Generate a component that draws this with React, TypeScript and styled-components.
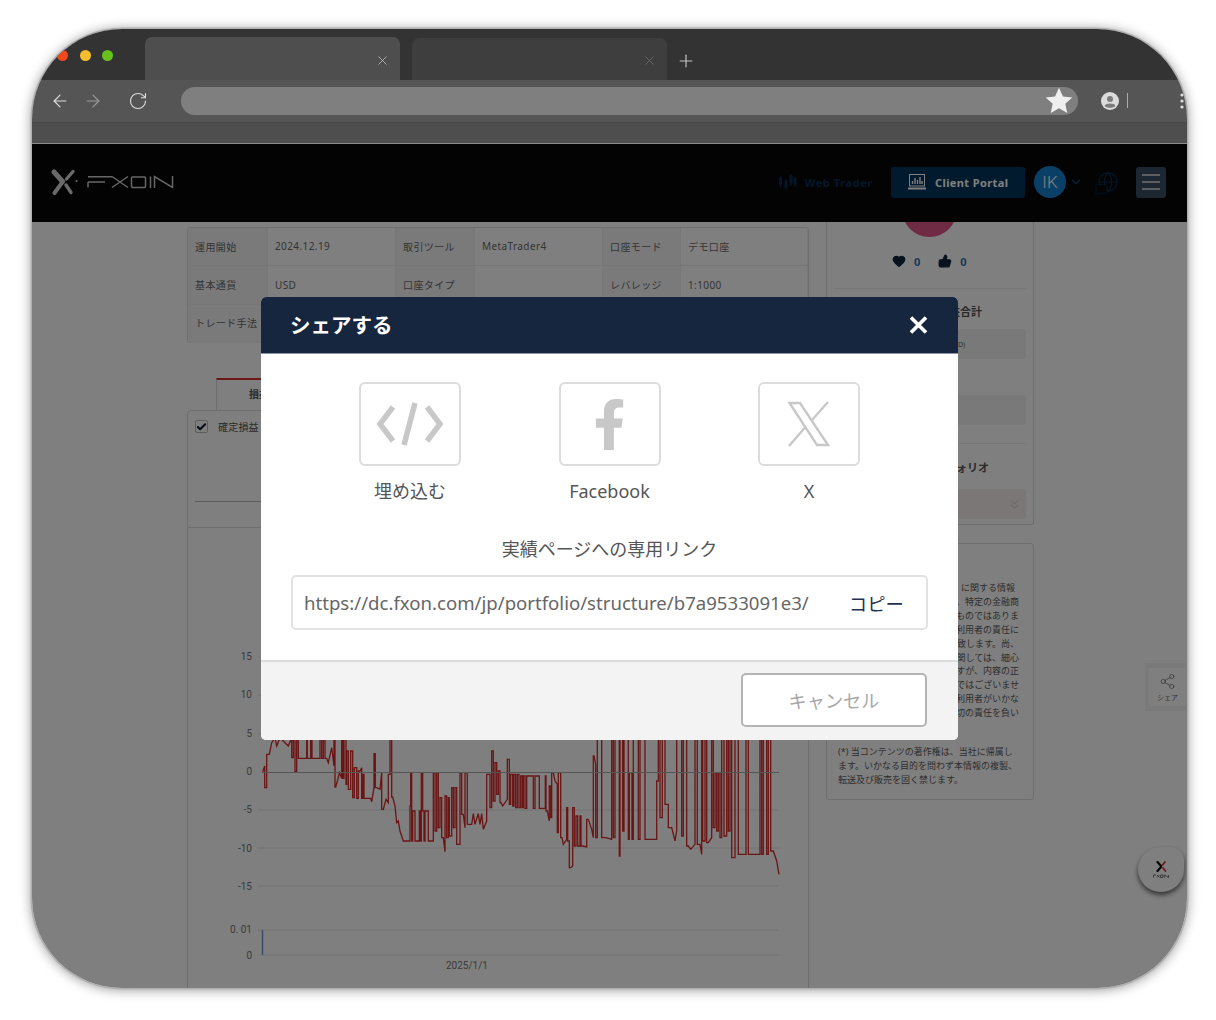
import React from "react";
import styled, { createGlobalStyle } from "styled-components";
import { ArrowLeft, ArrowRight, RotateCw, Plus, X, Globe, MessageSquare, ChevronDown, ChevronsDown, Heart, ThumbsUp, Share2, Check } from "lucide-react";
import { FaFacebookF } from "react-icons/fa";

const FONT = `"Noto Sans", "Noto Sans CJK JP", sans-serif`;

const Global = createGlobalStyle`
  html, body { margin: 0; padding: 0; background: #fff; overflow: hidden; height: 1020px; }
  * { box-sizing: border-box; }
  body { font-family: ${FONT}; }
`;

const Stage = styled.div`
  width: 1216px;
  height: 1020px;
  padding: 29px 29px 32px 32px;
`;
const Win = styled.div`
  width: 1155px;
  height: 959px;
  border-radius: 90px;
  overflow: hidden;
  display: flex;
  flex-direction: column;
  box-shadow: 0 0 0 1.5px #b0b0b0, 0 1px 12px 1px rgba(0, 0, 0, 0.4);
`;
const TabStrip = styled.div`
  height: 51px;
  background: #333;
  display: flex;
  align-items: flex-end;
  padding-left: 25px;
  flex: none;
`;
const Lights = styled.div`
  display: flex;
  gap: 11.5px;
  align-self: flex-start;
  margin: 21px 32px 0 0;
`;
const Light = styled.span<{ $c: string }>`
  width: 11px;
  height: 11px;
  border-radius: 50%;
  background: ${(p) => p.$c};
`;
const Tab = styled.div<{ $active?: boolean }>`
  width: 255px;
  height: ${(p) => (p.$active ? 43 : 42)}px;
  margin-right: 12px;
  border-radius: 7px 7px 0 0;
  background: ${(p) => (p.$active ? "#4e4e4e" : "#3e3e3e")};
  color: ${(p) => (p.$active ? "#c0c0c0" : "#707070")};
  display: flex;
  align-items: center;
  justify-content: flex-end;
  padding: 3px 10px 0 0;
`;
const NewTab = styled.div`
  color: #c4c4c4;
  display: flex;
  margin: 0 0 9px -3px;
`;
const Toolbar = styled.div`
  height: 43px;
  flex: none;
  background: #555;
  border-bottom: 1px solid #494949;
  display: flex;
  align-items: center;
  padding: 0 0 1px 18px;
`;
const NavIcon = styled.span<{ $dim?: boolean; $gap: number }>`
  display: flex;
  margin-right: ${(p) => p.$gap}px;
  color: ${(p) => (p.$dim ? "#9a9a9a" : "#dedede")};
`;
const UrlPill = styled.div`
  width: 897px;
  height: 28px;
  border-radius: 14px;
  background: #7f7f7f;
  display: flex;
  align-items: center;
  justify-content: flex-end;
  padding-right: 5px;
  margin-right: 23px;
`;
const ToolSep = styled.span`
  width: 1px;
  height: 15px;
  background: #aaa;
  margin-left: 8px;
`;
const MenuDots = styled.svg`
  margin-left: 52px;
`;
const BookmarkBar = styled.div`
  height: 21px;
  flex: none;
  background: #4e4e4e;
  border-bottom: 1px solid #8c8c8c;
`;
const Page = styled.div`
  position: relative;
  flex: 1;
  background: #fff;
  overflow: hidden;
`;
const Nav = styled.header`
  position: relative;
  z-index: 1;
  height: 78px;
  background: #060606;
  display: flex;
  align-items: center;
  padding: 0 21px 2px 19px;
`;
const NavRight = styled.div`
  margin-left: auto;
  display: flex;
  align-items: center;
`;
const WebTrader = styled.a`
  display: flex;
  align-items: center;
  gap: 8px;
  font-size: 11px;
  font-weight: 700;
  letter-spacing: 0.6px;
  color: #043054;
  margin-right: 18px;
`;
const PortalButton = styled.a`
  width: 134px;
  height: 31px;
  border-radius: 3px;
  background: #05345a;
  color: #fff;
  display: flex;
  align-items: center;
  padding-left: 17px;
  gap: 9px;
  font-size: 11px;
  font-weight: 700;
  letter-spacing: 0.4px;
  margin-right: 9px;
`;
const UserCircle = styled.div`
  width: 32px;
  height: 32px;
  border-radius: 50%;
  background: #1480d0;
  color: #fff;
  font: 300 17px Roboto, sans-serif;
  display: flex;
  align-items: center;
  justify-content: center;
`;
const UserCaret = styled.span`
  display: flex;
  color: #0a4a78;
  margin: 0 14px 0 3px;
`;
const GlobeWrap = styled.span`
  position: relative;
  display: flex;
  color: #043054;
  margin-right: 17px;
`;
const GlobeBubble = styled.span`
  position: absolute;
  left: -2px;
  bottom: -3px;
  display: flex;
`;
const Burger = styled.button`
  width: 30px;
  height: 31px;
  border: 0;
  padding: 0;
  border-radius: 3px;
  background: #384e64;
  display: flex;
  align-items: center;
  justify-content: center;
`;
const Content = styled.main`
  display: flex;
  gap: 17px;
  padding: 5px 0 0 155px;
`;
const LeftCol = styled.div`
  width: 622px;
  flex: none;
`;
const InfoTable = styled.div`
  display: grid;
  grid-template-columns: 80px 128px 79px 128px 78px 1fr;
  grid-auto-rows: 38.4px;
  height: 116px;
  border: 1px solid #ddd;
  border-radius: 3px;
`;
const Cell = styled.div<{ $label?: boolean }>`
  background: ${(p) => (p.$label ? "#f4f4f4" : "#fff")};
  border-bottom: 1px solid #eee;
  border-right: 1px solid #eee;
  font-size: 10px;
  letter-spacing: 0.4px;
  color: #6a6a6a;
  display: flex;
  align-items: center;
  padding: 0 0 1px 7px;
  white-space: nowrap;
`;
const TabRow = styled.div`
  margin: 35px 0 0 29px;
  width: 90px;
  height: 32px;
  border: 1px solid #ddd;
  border-top: 2px solid #d83030;
  border-bottom: 0;
  font-size: 10px;
  font-weight: 700;
  color: #555;
  padding: 6px 0 0 32px;
`;
const FilterPanel = styled.div`
  height: 118px;
  border: 1px solid #ddd;
  border-radius: 4px 4px 0 0;
  padding: 8px 7px 0;
`;
const CheckRow = styled.div`
  display: flex;
  align-items: center;
  gap: 10px;
  font-size: 10px;
  letter-spacing: 0.2px;
  color: #555;
`;
const CheckBox = styled.span`
  width: 13px;
  height: 13px;
  border: 1px solid #bbb;
  border-radius: 2px;
  color: #0c1a30;
  display: flex;
  align-items: center;
  justify-content: center;
`;
const Rule = styled.div`
  height: 1px;
  background: #bbb;
  margin-top: 67px;
`;
const ChartPanel = styled.div`
  height: 470px;
  border: 1px solid #ddd;
  border-top: 0;
`;
const RightCol = styled.aside`
  width: 208px;
  flex: none;
  margin-top: -5px;
`;
const Card = styled.section<{ $h: number }>`
  height: ${(p) => p.$h}px;
  border: 1px solid #ddd;
  border-radius: 0 0 3px 3px;
  padding: 0 7px;
`;
const ProfileCard = styled(Card)`
  border-top: 0;
  display: flow-root;
`;
const Avatar = styled.div`
  width: 55px;
  height: 55px;
  border-radius: 50%;
  background: #de5686;
  margin: -40px 0 0 68px;
`;
const Reactions = styled.div`
  height: 16px;
  margin: 16px 0 0 58px;
  display: flex;
  align-items: center;
  font-size: 11px;
  font-weight: 700;
  color: #2f6fae;
`;
const ReactIcon = styled.span<{ $gap: number }>`
  display: flex;
  color: #10243f;
  margin-right: ${(p) => p.$gap}px;
`;
const ReactCount = styled.span`
  margin-right: 18px;
`;
const Divider = styled.div<{ $mt: number }>`
  height: 1px;
  background: #eee;
  margin-top: ${(p) => p.$mt}px;
`;
const SideTitle = styled.div<{ $mt: number; $ml: number }>`
  margin: ${(p) => p.$mt}px 0 0 ${(p) => p.$ml}px;
  height: 16px;
  line-height: 16px;
  font-size: 11px;
  font-weight: 700;
  color: #555;
`;
const ValueBox = styled.div<{ $mt: number; $tint?: boolean }>`
  height: 30px;
  margin-top: ${(p) => p.$mt}px;
  background: ${(p) => (p.$tint ? "#f6efee" : "#f3f3f3")};
  border-radius: 2px;
  display: flex;
  align-items: center;
  justify-content: space-between;
  padding: 0 4px 0 124px;
  font-size: 7px;
  color: #666;
`;
const ChevronIcon = styled.span`
  display: flex;
  color: #b8b8b8;
`;
const NoticeCard = styled(Card)`
  margin-top: 18px;
  border-top: 1px solid #ddd;
  border-radius: 3px;
  padding: 37px 14px 0 11px;
  font-size: 9px;
  line-height: 13.9px;
  color: #5c5c5c;
`;
const NoticeLine = styled.div<{ $inset?: boolean }>`
  text-align: right;
  white-space: nowrap;
  padding-right: ${(p) => (p.$inset ? 4 : 0)}px;
`;
const CopyrightNote = styled.div`
  margin-top: 25px;
  white-space: nowrap;
`;
const SideShare = styled.div`
  position: absolute;
  right: 1px;
  top: 519px;
  width: 41px;
  height: 48px;
  background: #f5f5f5;
  padding: 5px 0 5px 4px;
`;
const SideShareInner = styled.div`
  height: 100%;
  background: #fff;
  border-radius: 2px;
  font-size: 7px;
  line-height: 10px;
  display: flex;
  flex-direction: column;
  align-items: center;
  padding-top: 5px;
  gap: 3px;
  color: #666;
`;
const FloatButton = styled.div`
  position: absolute;
  left: 1106px;
  top: 703px;
  width: 46px;
  height: 45px;
  border-radius: 50% 30% 50% 50%;
  background: #fff;
  box-shadow: 0 3px 5px rgba(0, 0, 0, 0.6);
  display: flex;
  align-items: center;
  justify-content: center;
`;
const Overlay = styled.div`
  position: absolute;
  inset: 0;
  z-index: 5;
  background: rgba(0, 0, 0, 0.5);
  padding: 153px 0 0 229px;
`;
const Modal = styled.div`
  width: 697px;
  height: 443px;
  border-radius: 5px;
  background: #fff;
  overflow: hidden;
  display: flex;
  flex-direction: column;
`;
const ModalHead = styled.div`
  height: 57px;
  flex: none;
  background: #16263f;
  border-bottom: 1px solid #8b95a5;
  display: flex;
  align-items: center;
  justify-content: space-between;
  padding: 0 30px 2px 29px;
  color: #fff;
  font-size: 20.5px;
  font-weight: 700;
`;
const CloseButton = styled.svg`
  display: block;
  margin-top: 2px;
`;
const ModalBody = styled.div`
  flex: 1;
  padding-top: 28px;
`;
const ShareRow = styled.div`
  display: flex;
  justify-content: center;
  gap: 97.5px;
`;
const ShareItem = styled.div`
  width: 102px;
  display: flex;
  flex-direction: column;
  align-items: center;
  gap: 13px;
`;
const ShareBox = styled.div`
  width: 102px;
  height: 84px;
  border: 2px solid #dcdcdc;
  border-radius: 6px;
  color: #c8c8c8;
  display: flex;
  align-items: center;
  justify-content: center;
`;
const ShareLabel = styled.div`
  height: 24px;
  line-height: 24px;
  font-size: 18px;
  color: #555;
  white-space: nowrap;
`;
const LinkTitle = styled.div`
  margin-top: 34px;
  height: 24px;
  line-height: 24px;
  text-align: center;
  font-size: 18px;
  color: #555;
`;
const LinkBox = styled.div`
  margin: 14px 30px 0;
  height: 55px;
  border: 2px solid #e2e2e2;
  border-radius: 5px;
  display: flex;
  align-items: center;
  justify-content: space-between;
  padding: 0 22px 0 11px;
`;
const LinkUrl = styled.span`
  font-size: 18.6px;
  color: #666;
  white-space: nowrap;
`;
const CopyButton = styled.span`
  font-size: 18.4px;
  color: #1f3350;
`;
const ModalFoot = styled.div`
  height: 80px;
  flex: none;
  background: #f3f3f3;
  border-top: 2px solid #dcdcdc;
  display: flex;
  justify-content: flex-end;
  padding: 11px 31px 0 0;
`;
const CancelButton = styled.button`
  width: 186px;
  height: 54px;
  background: #fff;
  border: 2px solid #b4b4b4;
  border-radius: 5px;
  color: #a8a8a8;
  font: 400 18.2px ${FONT};
`;
const AxisText = styled.text`
  font: 400 10px Roboto, sans-serif;
  fill: #767676;
`;

const raw8 = "248,392 254,375 260,440 268,340 275,305 285,290 290,315 300,290 325,315 335,290 340,350 345,290 350,392 355,290 358,352 380,352 382,290 392,352 396,290 400,352 420,352 425,290 430,352 435,290 440,352 445,365 455,320 462,375 465,290 467,438 475,410 478,395 485,412 488,290 492,412 498,290 500,430 505,330 512,445 518,330 523,470 530,380 535,472 540,390 545,380 548,472 552,400 555,472 572,472 575,482 582,440 586,338 590,440 600,445 605,395 610,505 618,475 625,485 630,400 635,290 638,468 645,495 650,545 655,540 660,570 670,600 690,600 692,495 695,395 698,600 705,510 708,600 718,600 720,510 724,600 728,395 732,510 735,600 745,510 750,600 760,600 765,395 770,570 775,395 780,560 785,470 790,590 795,632 800,465 805,590 808,470 815,585 820,440 825,560 830,440 835,610 840,610 845,395 850,520 855,560 862,395 865,550 875,550 880,518 885,550 895,518 900,550 905,518 910,565 920,540 930,400 935,500 940,330 945,480 950,365 955,460 960,390";
const raw9 = "0,120 3,215 8,225 22,205 28,85 32,220 38,130 42,225 47,130 52,230 57,130 62,230 67,135 70,230 75,135 80,232 90,135 100,135 105,232 118,135 122,232 136,232 138,135 142,240 148,270 152,165 155,260 160,125 165,150 172,160 175,305 182,125 186,320 190,340 200,325 203,230 208,330 212,410 218,405 223,230 228,345 233,255 240,345 243,255 248,345 260,348 265,265 275,295 280,320 282,75 287,100 292,320 296,20 305,20 318,320 335,325 340,20 345,320 358,20 360,375 368,20 372,300 385,20 388,325 396,125 400,325 415,20 420,325 435,20 440,325 470,325 475,150 480,20 487,260 495,20 505,220 515,290 525,330 530,300 545,20 550,315 560,20 565,345 572,355 585,340 592,20 600,340 605,370 608,20 615,330 620,20 625,335 635,320 640,20 645,290 650,125 655,300 660,125 665,320 672,20 680,315 685,20 690,300 695,20 705,380 715,20 718,370 738,370 745,20 748,370 780,370 785,20 790,370 800,20 805,370 812,20 820,360 830,390 837,430";
const toPts = (s: string, ox: number, oy: number) => {
  let px = 0;
  let py = 0;
  return s.split(" ").map((p, i) => {
    const [rx, y] = p.split(",").map(Number);
    const jump = i > 0 && Math.abs(y - py) > 55;
    const x = jump ? px : rx;
    px = rx;
    py = y;
    return `${(ox + x / 3).toFixed(1)},${(oy + y / 3).toFixed(1)} ${(ox + rx / 3).toFixed(1)},${(oy + y / 3).toFixed(1)}`;
  }).join(" ");
};
const LINE = toPts(raw8, 180, 640) + " " + toPts(raw9, 500, 730);

const yTicks: [string, number][] = [["15", 656], ["10", 694], ["5", 733], ["0", 771], ["-5", 809], ["-10", 848], ["-15", 886]];

function Chart() {
  return (
    <svg width="620" height="461" viewBox="188 527 620 461" style={{ display: "block" }}>
      {[656, 694, 733, 809, 847, 885, 929, 954].map((y) => (
        <line key={y} x1="258" x2="779" y1={y} y2={y} stroke="#e4e4e4" />
      ))}
      {yTicks.map(([t, y]) => (
        <AxisText key={t} x="252" y={y + 3} textAnchor="end">{t}</AxisText>
      ))}
      <AxisText x="252" y="932" textAnchor="end">0. 01</AxisText>
      <AxisText x="252" y="958" textAnchor="end">0</AxisText>
      <AxisText x="467" y="968" textAnchor="middle">2025/1/1</AxisText>
      <polyline points={LINE} fill="none" stroke="#d62828" strokeWidth="1.3" />
      <line x1="262" x2="779" y1="771.5" y2="771.5" stroke="#ababab" strokeWidth="1.2" />
      <line x1="262.5" x2="262.5" y1="929" y2="954" stroke="#7c92dc" strokeWidth="1.5" />
    </svg>
  );
}

function FxonLogo() {
  return (
    <svg width="125" height="26" viewBox="51 170 125 26" fill="none">
      <g stroke="#d4d4d4" strokeLinecap="round">
        <path d="M54 173 L62.5 182.5" strokeWidth="5" />
        <path d="M54.5 194 L62.5 183" strokeWidth="4" />
        <path d="M73 172.5 L66.5 180" strokeWidth="3.4" />
        <path d="M66 186 L71 193.5" strokeWidth="3.4" />
      </g>
      <circle cx="76.5" cy="182" r="1.1" fill="#d4d4d4" />
      <g stroke="#cfcfcf" strokeWidth="1.5">
        <path d="M88 177.7 H112 M88 183 H105 M88 183 V188.5 M112 177.5 L128 188.5 M128 177.5 L112 188.5" />
        <rect x="131.5" y="178" width="14" height="10.5" rx="1" />
        <path d="M150.5 177.5 V189 M154.5 189 V177.5 L172.5 188.5 V177" />
      </g>
    </svg>
  );
}

function MiniLogo() {
  return (
    <svg width="17" height="17" viewBox="0 0 17 17" fill="none">
      <path d="M4.5 1 L8 5 M4.5 10 L8 6" stroke="#111" strokeWidth="2.2" strokeLinecap="round" />
      <path d="M12 1 L9.5 4 M10 7 L12.5 10" stroke="#d82a2a" strokeWidth="1.7" strokeLinecap="round" />
      <path d="M0.5 14 H3 M0.5 14 V16.5 M4 14 L6.5 16.5 M6.5 14 L4 16.5 M7.5 14 H10 V16.5 H7.5 Z M11.5 16.5 V14 L15.5 16.5 V14" stroke="#444" strokeWidth="0.7" />
    </svg>
  );
}

function PortalIcon() {
  return (
    <svg width="18" height="16" viewBox="0 0 18 16" fill="none" stroke="currentColor">
      <rect x="1.5" y="0.5" width="15" height="11.5" />
      <path d="M0 14.5 H18" strokeWidth="2" />
      <path d="M4.5 10 V7 M7 10 V4 M9.5 10 V6 M12 10 V3 M14 10 V7" strokeWidth="1.4" />
    </svg>
  );
}

function CandleIcon() {
  return (
    <svg width="19" height="16" viewBox="0 0 19 16" fill="currentColor" stroke="currentColor">
      <path d="M2.5 2 V13 M8 5 V16 M13 0 V12 M17 3 V13" strokeWidth="1" />
      <rect x="1.5" y="4" width="2" height="6" />
      <rect x="7" y="7" width="2" height="6" />
      <rect x="12" y="2" width="2" height="7" />
      <rect x="16" y="5" width="2" height="5" />
    </svg>
  );
}

function Account() {
  return (
    <svg width="18" height="18" viewBox="0 0 18 18">
      <circle cx="9" cy="9" r="9" fill="#dcdcdc" />
      <circle cx="9" cy="7" r="3" fill="#7c7c7c" />
      <path d="M3.5 14 C5 10.8 13 10.8 14.5 14 C12.5 16.4 5.5 16.4 3.5 14Z" fill="#7c7c7c" />
    </svg>
  );
}

const rows = [
  ["運用開始", "2024.12.19", "取引ツール", "MetaTrader4", "口座モード", "デモ口座"],
  ["基本通貨", "USD", "口座タイプ", "", "レバレッジ", "1:1000"],
  ["トレード手法", "", "", "", "", ""],
];
const notice = ["に関する情報", "、特定の金融商", "ものではありま", "利用者の責任に", "致します。尚、", "関しては、細心", "すが、内容の正", "ではございませ", "利用者がいかな", "切の責任を負い"];

export default function App() {
  return (
    <Stage>
      <Global />
      <Win>
        <TabStrip>
          <Lights>
            <Light $c="#f0491d" />
            <Light $c="#f6bd2d" />
            <Light $c="#67c01c" />
          </Lights>
          <Tab $active><X size={15} strokeWidth={1.3} /></Tab>
          <Tab><X size={15} strokeWidth={1.3} /></Tab>
          <NewTab><Plus size={20} strokeWidth={1.4} /></NewTab>
        </TabStrip>
        <Toolbar>
          <NavIcon $gap={13}><ArrowLeft size={20} strokeWidth={1.4} /></NavIcon>
          <NavIcon $dim $gap={25}><ArrowRight size={20} strokeWidth={1.4} /></NavIcon>
          <NavIcon $gap={33}><RotateCw size={20} strokeWidth={1.3} /></NavIcon>
          <UrlPill>
            <svg width="28" height="27" viewBox="0 0 24 23"><path fill="#efefef" d="M12 0.5 L15.4 8 L23.4 8.9 L17.4 14.3 L19.1 22.3 L12 18.2 L4.9 22.3 L6.6 14.3 L0.6 8.9 L8.6 8 Z" /></svg>
          </UrlPill>
          <Account />
          <ToolSep />
          <MenuDots width="4" height="16" viewBox="0 0 4 16"><circle cx="2" cy="2" r="1.6" fill="#ddd" /><circle cx="2" cy="8" r="1.6" fill="#ddd" /><circle cx="2" cy="14" r="1.6" fill="#ddd" /></MenuDots>
        </Toolbar>
        <BookmarkBar />
        <Page>
          <Nav>
            <FxonLogo />
            <NavRight>
              <WebTrader><CandleIcon />Web Trader</WebTrader>
              <PortalButton><PortalIcon />Client Portal</PortalButton>
              <UserCircle>IK</UserCircle>
              <UserCaret><ChevronDown size={14} /></UserCaret>
              <GlobeWrap>
                <Globe size={22} strokeWidth={1.2} />
                <GlobeBubble><MessageSquare size={13} strokeWidth={1.4} fill="#060606" /></GlobeBubble>
              </GlobeWrap>
              <Burger>
                <svg width="20" height="18" viewBox="0 0 20 18" stroke="#e4e4e4" strokeWidth="1.7"><path d="M1 2 H19 M1 9 H19 M1 16 H19" /></svg>
              </Burger>
            </NavRight>
          </Nav>
          <Content>
            <LeftCol>
              <InfoTable>
                {rows.flatMap((r, i) =>
                  r.map((c, j) => <Cell key={`${i}-${j}`} $label={j % 2 === 0}>{c}</Cell>)
                )}
              </InfoTable>
              <TabRow>損益</TabRow>
              <FilterPanel>
                <CheckRow>
                  <CheckBox><Check size={14} strokeWidth={4.5} /></CheckBox>
                  確定損益
                </CheckRow>
                <Rule />
              </FilterPanel>
              <ChartPanel><Chart /></ChartPanel>
            </LeftCol>
            <RightCol>
              <ProfileCard $h={303}>
                <Avatar />
                <Reactions>
                  <ReactIcon $gap={8}><Heart size={14} fill="currentColor" /></ReactIcon>
                  <ReactCount>0</ReactCount>
                  <ReactIcon $gap={8}><ThumbsUp size={14} fill="currentColor" /></ReactIcon>
                  <span>0</span>
                </Reactions>
                <Divider $mt={19} />
                <SideTitle $mt={15} $ml={115}>益合計</SideTitle>
                <ValueBox $mt={9}>D)</ValueBox>
                <ValueBox $mt={36} />
                <Divider $mt={18} />
                <SideTitle $mt={16} $ml={122}>ォリオ</SideTitle>
                <ValueBox $mt={13} $tint>
                  <span />
                  <ChevronIcon><ChevronsDown size={15} strokeWidth={1.3} /></ChevronIcon>
                </ValueBox>
              </ProfileCard>
              <NoticeCard $h={257}>
                {notice.map((t, i) => <NoticeLine key={t} $inset={i === 0}>{t}</NoticeLine>)}
                <CopyrightNote>
                  (*) 当コンテンツの著作権は、当社に帰属し<br />
                  ます。いかなる目的を問わず本情報の複製、<br />
                  転送及び販売を固く禁じます。
                </CopyrightNote>
              </NoticeCard>
            </RightCol>
          </Content>
          <SideShare>
            <SideShareInner>
              <Share2 size={17} strokeWidth={1} />
              シェア
            </SideShareInner>
          </SideShare>
          <FloatButton><MiniLogo /></FloatButton>
          <Overlay>
            <Modal>
              <ModalHead>
                シェアする
                <CloseButton width="19" height="18" viewBox="0 0 19 18">
                  <path d="M2 1.5 L17 16.5 M17 1.5 L2 16.5" stroke="#fff" strokeWidth="3.6" />
                </CloseButton>
              </ModalHead>
              <ModalBody>
                <ShareRow>
                  <ShareItem>
                    <ShareBox>
                      <svg width="70" height="50" viewBox="-35 -25 70 50" fill="none" stroke="currentColor" strokeWidth="5.5">
                        <path d="M-17 -17 L-30 0 L-17 17 M17 -17 L30 0 L17 17 M5 -21 L-6 21" />
                      </svg>
                    </ShareBox>
                    <ShareLabel>埋め込む</ShareLabel>
                  </ShareItem>
                  <ShareItem>
                    <ShareBox><FaFacebookF size={51} /></ShareBox>
                    <ShareLabel>Facebook</ShareLabel>
                  </ShareItem>
                  <ShareItem>
                    <ShareBox>
                      <svg width="44" height="46" viewBox="-1 -1 44 46" fill="none" stroke="currentColor" strokeWidth="2.4">
                        <path d="M1.5 1 H12 L40 43 H29 Z" />
                        <path d="M40 0 L24 18 M17 25.5 L1 44" />
                      </svg>
                    </ShareBox>
                    <ShareLabel>X</ShareLabel>
                  </ShareItem>
                </ShareRow>
                <LinkTitle>実績ページへの専用リンク</LinkTitle>
                <LinkBox>
                  <LinkUrl>https://dc.fxon.com/jp/portfolio/structure/b7a9533091e3/</LinkUrl>
                  <CopyButton>コピー</CopyButton>
                </LinkBox>
              </ModalBody>
              <ModalFoot>
                <CancelButton>キャンセル</CancelButton>
              </ModalFoot>
            </Modal>
          </Overlay>
        </Page>
      </Win>
    </Stage>
  );
}
